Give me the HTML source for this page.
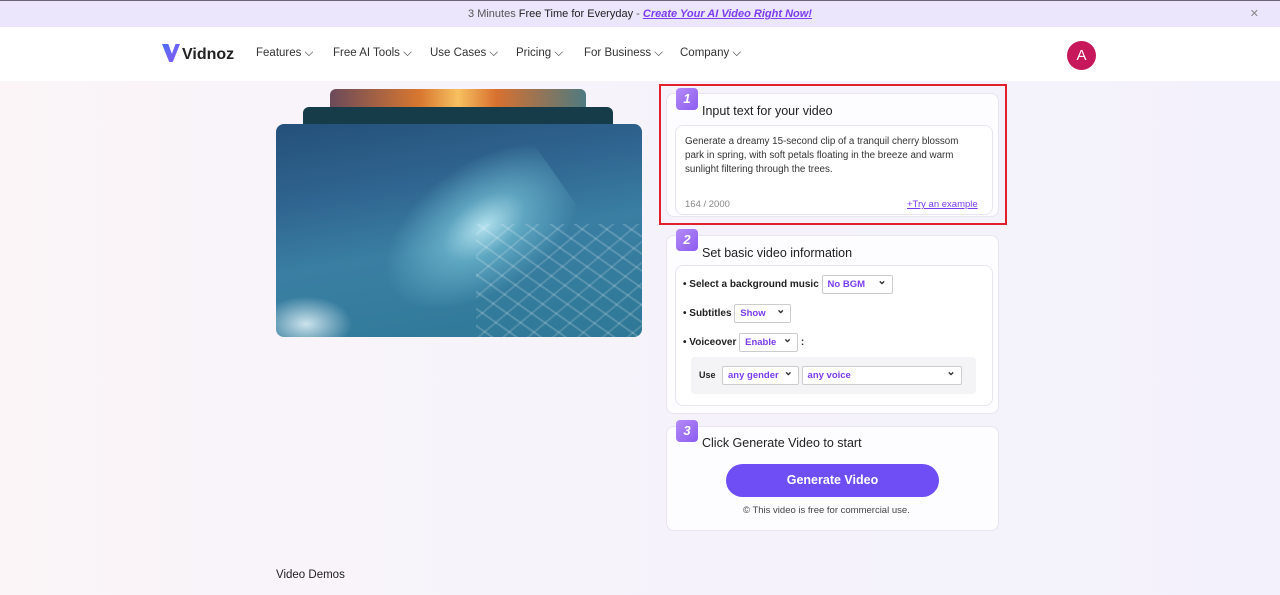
<!DOCTYPE html>
<html><head><style>
*{box-sizing:border-box;margin:0;padding:0}
body{width:1280px;height:595px;overflow:hidden;font-family:"Liberation Sans",sans-serif;background:linear-gradient(90deg,#fbf5f7 0%,#f6f3fb 40%,#f3f1fb 100%);position:relative;color:#1f1d2b}
.top{position:absolute;left:0;top:0;width:1280px;height:27px;background:#ebe6fc;border-top:1px solid #6b6575;font-size:11px;color:#555;text-align:center;line-height:26px}
.top a{color:#7b3cf0;font-style:italic;font-weight:bold;text-decoration:underline}
.top .x{position:absolute;right:21px;top:0;color:#888;font-size:11px}
.hdr{position:absolute;left:0;top:27px;width:1280px;height:54px;background:#fff}
.logo{position:absolute;left:162px;top:17px;font-weight:bold;font-size:16px;color:#222}
.nav{position:absolute;top:20px;font-size:11.5px;color:#333}
.av{position:absolute;left:1067px;top:14px;width:29px;height:29px;border-radius:50%;background:#c6185a;color:#fff;text-align:center;line-height:29px;font-size:15px}
.card{position:absolute;left:666px;width:333px;background:#fdfcff;border:1px solid #e8e5ef;border-radius:8px}
.badge{position:absolute;left:676px;width:22px;height:22px;border-radius:4px;background:linear-gradient(135deg,#b58af7,#8b5cf0);color:#fff;font-style:italic;font-weight:bold;font-size:13px;text-align:center;line-height:22px}
.ttl{position:absolute;left:702px;font-size:12.5px;color:#222}
.inner{position:absolute;border:1px solid #e8e5ef;border-radius:8px;background:#fff}
.sel{display:inline-block;border:1px solid #ccc;border-radius:2px;color:#7b3cf0;font-size:9.5px;font-weight:bold;height:19px;line-height:17px;padding-left:5px;position:relative;background:#fff;vertical-align:middle}
.sel:after{content:"⌄";position:absolute;right:5px;top:-3px;color:#333;font-size:11px}
.row{position:absolute;left:683px;font-size:10px;font-weight:bold;color:#222}
</style></head><body>
<div class="top">3 Minutes <span style="color:#222">Free Time for Everyday</span> - <a>Create Your AI Video Right Now!</a><span class="x">✕</span></div>
<div class="hdr">
<div class="logo"><span style="display:inline-block;width:18px;height:18px;background:linear-gradient(135deg,#4b6cf7,#8b5cf6);clip-path:polygon(0 0,35% 0,55% 55%,75% 0,100% 0,60% 100%,40% 100%);vertical-align:-3px;margin-right:2px"></span>Vidnoz</div>
<div class="nav" style="left:256px">Features ⌵</div>
<div class="nav" style="left:333px">Free AI Tools ⌵</div>
<div class="nav" style="left:430px">Use Cases ⌵</div>
<div class="nav" style="left:516px">Pricing ⌵</div>
<div class="nav" style="left:584px">For Business ⌵</div>
<div class="nav" style="left:680px">Company ⌵</div>
<div class="av">A</div>
</div>
<div style="position:absolute;left:330px;top:89px;width:256px;height:30px;border-radius:6px 6px 0 0;background:linear-gradient(90deg,#6b4a5a,#d8772f 35%,#f7c060 50%,#d8702f 65%,#4d7a80)"></div>
<div style="position:absolute;left:303px;top:107px;width:310px;height:30px;border-radius:6px 6px 0 0;background:#153c48"></div>
<div style="position:absolute;left:276px;top:124px;width:366px;height:213px;border-radius:8px;overflow:hidden;background:linear-gradient(170deg,#24507a 0%,#2f6590 30%,#3a7fa3 55%,#2e7896 100%)">
<div style="position:absolute;left:80px;top:40px;width:220px;height:150px;background:radial-gradient(ellipse at 60% 50%,rgba(190,235,245,.9) 0%,rgba(120,195,215,.6) 25%,transparent 60%);transform:rotate(-35deg)"></div>
<div style="position:absolute;left:200px;top:100px;width:170px;height:120px;background:repeating-linear-gradient(35deg,rgba(255,255,255,.18) 0 2px,transparent 2px 14px),repeating-linear-gradient(-40deg,rgba(255,255,255,.15) 0 2px,transparent 2px 16px)"></div>
<div style="position:absolute;left:-20px;top:170px;width:100px;height:60px;background:radial-gradient(ellipse,rgba(230,245,250,.85),transparent 65%)"></div>
</div>
<div style="position:absolute;left:659px;top:84px;width:348px;height:141px;border:2px solid #e0202a"></div>
<div class="card" style="top:93px;height:124px"></div>
<div class="badge" style="top:88px">1</div>
<div class="ttl" style="top:104px">Input text for your video</div>
<div class="inner" style="left:675px;top:125px;width:318px;height:90px"></div>
<div style="position:absolute;left:685px;top:135px;width:295px;font-size:9.8px;line-height:14.2px;color:#333">Generate a dreamy 15-second clip of a tranquil cherry blossom park in spring, with soft petals floating in the breeze and warm sunlight filtering through the trees.</div>
<div style="position:absolute;left:685px;top:199px;font-size:9.5px;color:#888">164 / 2000</div>
<div style="position:absolute;left:907px;top:199px;font-size:9.5px;color:#7b3cf0;text-decoration:underline">+Try an example</div>
<div class="card" style="top:235px;height:179px"></div>
<div class="badge" style="top:229px">2</div>
<div class="ttl" style="top:246px">Set basic video information</div>
<div class="inner" style="left:675px;top:265px;width:318px;height:141px"></div>
<div class="row" style="top:275px">• Select a background music <span class="sel" style="width:71px">No BGM</span></div>
<div class="row" style="top:304px">• Subtitles <span class="sel" style="width:57px">Show</span></div>
<div class="row" style="top:333px">• Voiceover <span class="sel" style="width:59px">Enable</span> :</div>
<div style="position:absolute;left:691px;top:357px;width:285px;height:37px;background:#f4f3f6;border-radius:4px"></div>
<div class="row" style="left:699px;top:366px;font-size:9px">Use <span class="sel" style="width:77px;margin-left:4px">any gender</span> <span class="sel" style="width:160px">any voice</span></div>
<div class="card" style="top:426px;height:105px"></div>
<div class="badge" style="top:420px">3</div>
<div class="ttl" style="top:436px">Click Generate Video to start</div>
<div style="position:absolute;left:726px;top:464px;width:213px;height:33px;border-radius:17px;background:#6f4ef6;color:#fff;font-size:12.5px;font-weight:bold;text-align:center;line-height:33px">Generate Video</div>
<div style="position:absolute;left:743px;top:505px;font-size:9.5px;color:#444">© This video is free for commercial use.</div>
<div style="position:absolute;left:276px;top:569px;font-size:11.5px;color:#222">Video Demos</div>
</body></html>
